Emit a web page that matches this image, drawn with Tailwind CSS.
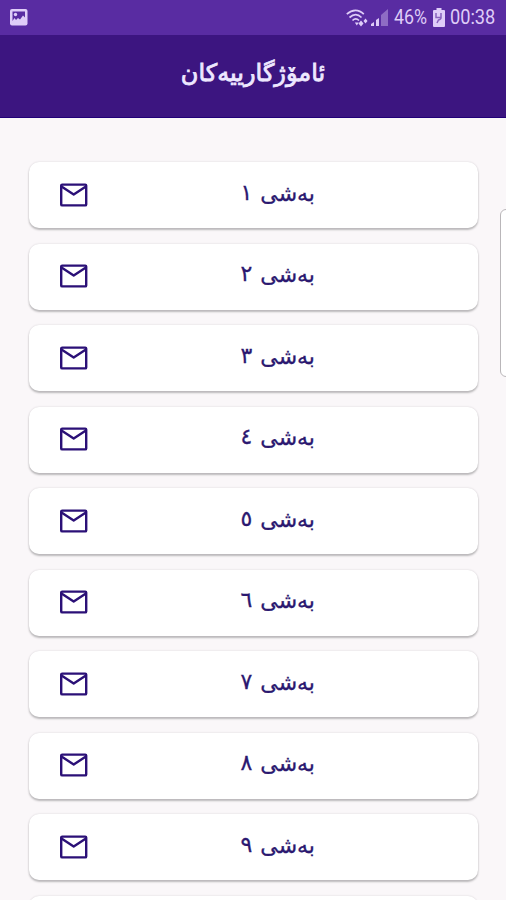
<!DOCTYPE html>
<html lang="ckb">
<head>
<meta charset="utf-8">
<title>ئامۆژگارییەکان</title>
<script src="https://cdn.jsdelivr.net/npm/@tailwindcss/browser@4"></script>
</head>
<body class="relative flex h-[900px] w-[506px] flex-col overflow-hidden bg-[#faf7f9]">
<header class="flex h-[118px] shrink-0 flex-col border-b border-[#210078] bg-[#3c1580]">
  <div class="flex h-[35px] shrink-0 items-center justify-between bg-[#592ca2] pr-[10px] pl-[10px] text-[#dfcdf8]">
    <svg class="h-[17px] w-[18px]" viewBox="0 0 18 17"><rect width="17.5" height="16.5" rx="2" fill="currentColor"/><path d="M2.500 2.500h12.500v6l-2-2-3 4-2-1.500-2 2-1.500-2-2 3z" fill="#592ca2"/><circle cx="5.500" cy="5.500" r="1.700" fill="currentColor"/></svg>
    <div class="flex items-center">
      <svg class="mr-[2px] h-[20px] w-[23px]" viewBox="0 0 23 20" fill="none" stroke="currentColor" stroke-width="1.700"><path d="M.8 6.200c5.500-5 12-5 17 0M3.500 9.500c4-3.500 8.500-3.500 12 0M6.500 12.500c2-2 4.500-2 6.500 0"/><path d="M8.800 14.500h4l-2 3zM12.500 15.500l2.500-3 2.500 3-2.500 3zM17.500 13l2-2.500 2 2.500-2 2.500z" fill="currentColor" stroke="none"/></svg>
      <svg class="mr-[6px] h-[18px] w-[17px]" viewBox="0 0 17 18" fill="currentColor"><path d="M0 17v-2l3-2v4zM5 17v-6l3-2v8z"/><path d="M10 17V6l7-6v17z" opacity=".4"/></svg>
      <span class="w-[34px] origin-left scale-x-[.89] font-['Roboto',sans-serif] text-[20px] leading-[35px] whitespace-nowrap">46%</span>
      <svg class="mr-[5px] ml-[5px] h-[19px] w-[12px]" viewBox="0 0 12 19"><path d="M3.500 0h5v2H11q1 0 1 1v15q0 1-1 1H1q-1 0-1-1V3q0-1 1-1h2.500z" fill="currentColor"/><path d="M3 5v4.500h5V5M8 9.500q0 2-2.500 2.500L4 15" fill="none" stroke="#8762bc" stroke-width="1.500"/></svg>
      <span class="w-[46px] origin-left scale-x-[.91] font-['Roboto',sans-serif] text-[20px] leading-[35px] whitespace-nowrap" dir="ltr">00:38</span>
    </div>
  </div>
  <h1 dir="rtl" class="pt-[22px] text-center font-['DejaVu_Sans',sans-serif] text-[24px] leading-[32px] text-[#eee8ff] [-webkit-text-stroke:0.8px_#eee8ff]"><span class="inline-block">ئامۆژگارییەکان</span></h1>
</header>
<main id="list" class="flex flex-col gap-[15.500px] pt-[44px] pr-[28px] pl-[29px]"></main>
<div class="absolute top-[209px] left-[500px] h-[168px] w-[12px] rounded-[7px] border border-[#b9b6b9] bg-white"></div>
<script>
const numbers = ['١','٢','٣','٤','٥','٦','٧','٨','٩',''];
document.getElementById('list').innerHTML = numbers.map(n => `
<article class="relative flex h-[66px] shrink-0 items-center rounded-[10px] bg-white pl-[30px] shadow-[0_2px_2px_#bbb9bb,0_0_2px_#d4d0d4]">
  ${n && `<svg class="mb-px h-[24px] w-[29px] shrink-0" viewBox="0 0 29 24" fill="none" stroke="#2b1077" stroke-width="2.400" stroke-linejoin="round"><rect x="2.200" y="1.600" width="25" height="20.800" rx="1"/><path d="M2.500 3.500l12.200 8 12.200-8"/></svg>
  <div dir="rtl" class="mb-[3px] ml-[126px] flex w-[101px] items-baseline gap-[8px] font-['DejaVu_Sans',sans-serif] text-[22px] leading-[32px] text-[#2b1870] [-webkit-text-stroke:0.3px_#2b1870]"><span class="whitespace-nowrap">بەشی</span><span class="-translate-y-px">${n}</span></div>`}
</article>`).join('');
</script>
</body>
</html>
